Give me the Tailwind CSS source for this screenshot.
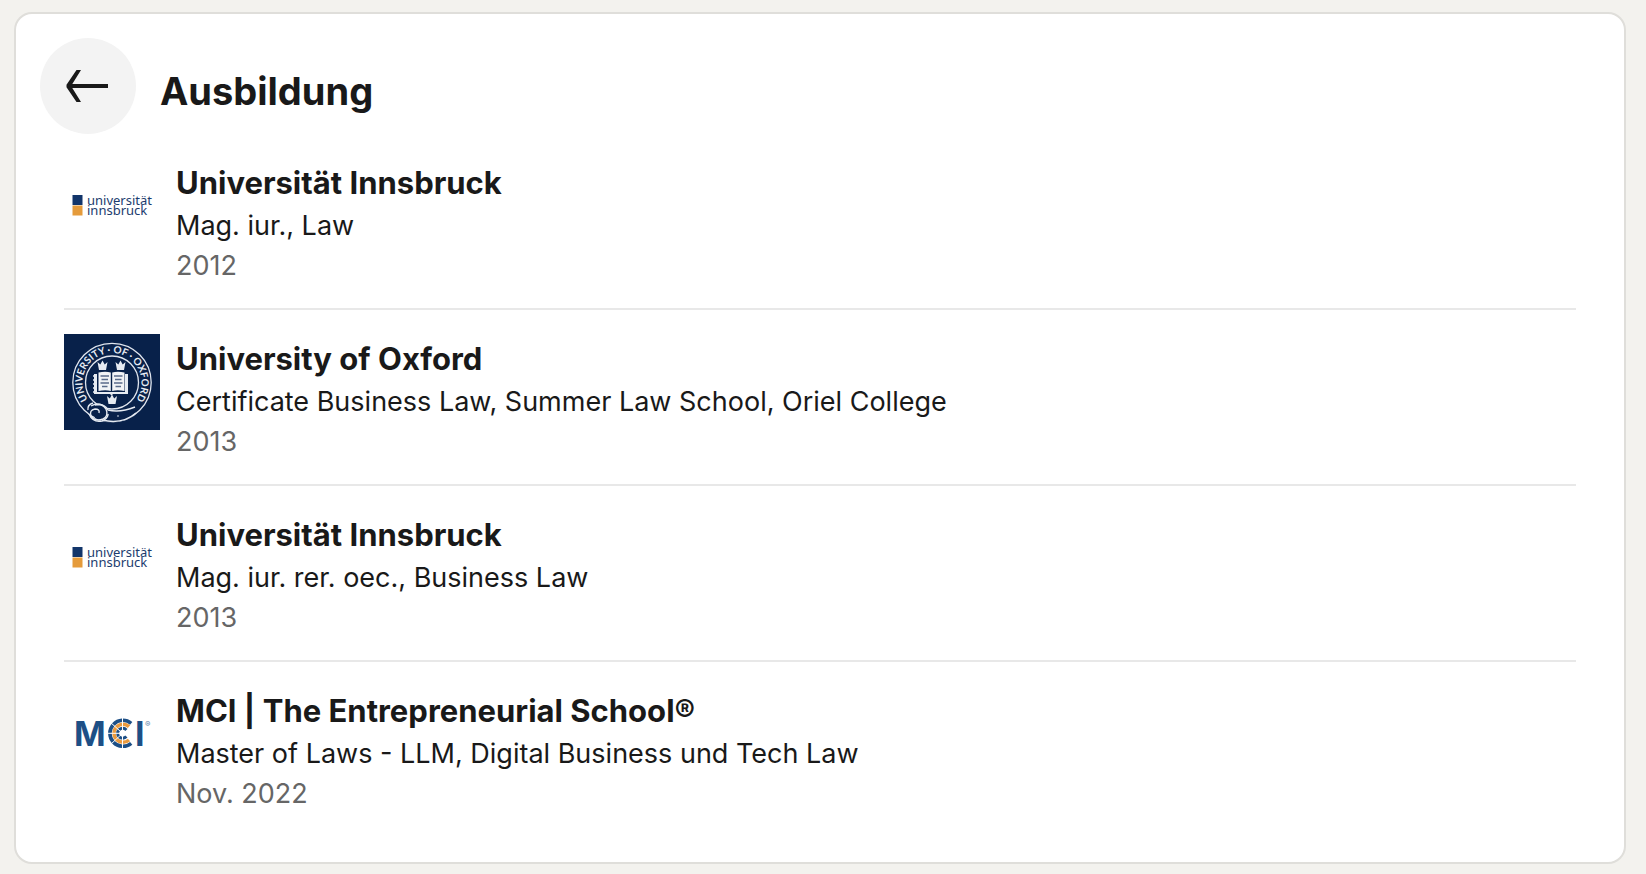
<!DOCTYPE html>
<html lang="de">
<head>
    <meta charset="UTF-8">
    <meta name="viewport" content="width=device-width, initial-scale=1.0">
    <title>Ausbildung</title>
    <script src="https://cdn.jsdelivr.net/npm/@tailwindcss/browser@4"></script>
</head>
<body class="bg-[#f3f2ee] text-[#191919] font-['Inter','Liberation_Sans',sans-serif]">

    <!-- Shared logo -->
    <svg class="hidden" aria-hidden="true">
        <symbol id="logo-innsbruck" viewBox="0 0 96 96">
            <rect x="8.5" y="37" width="10" height="10" fill="#12356a"/>
            <rect x="8.5" y="47.5" width="10" height="10" fill="#e59b3b"/>
            <text x="23" y="47" font-family="Noto Sans, sans-serif" font-size="13" fill="#1c3c6e">universität</text>
            <text x="23" y="57" font-family="Noto Sans, sans-serif" font-size="13" fill="#1c3c6e">innsbruck</text>
        </symbol>
    </svg>

    <main class="mt-3 mr-5 mb-2 ml-3.5 bg-white border-2 border-[#dfdeda] rounded-[18px] p-6">
        <!-- Header -->
        <header class="flex items-center gap-6">
            <button type="button" aria-label="Zurück" class="flex items-center justify-center size-24 rounded-full bg-[#f3f3f3]">
                <svg class="size-12" viewBox="0 0 48 48" fill="#191919">
                    <path d="M44 22v4H8.300l8.700 14h-4.500L2.500 25.200v-2.400L12.500 8H17L8.300 22z"/>
                </svg>
            </button>
            <h1 class="pt-2.5 text-[38px] leading-12 font-bold">Ausbildung</h1>
        </header>

        <!-- Education list -->
        <ul class="px-6 divide-y-2 divide-[#e8e8e8]">
            <li class="flex gap-4 pt-6 pb-[22px]">
                <svg class="size-24 shrink-0" role="img" aria-label="Universität Innsbruck"><use href="#logo-innsbruck"/></svg>
                <div>
                    <h2 class="pt-0.5 text-[31px] leading-[46px] font-bold">Universität Innsbruck</h2>
                    <p class="text-[27px] leading-10">Mag. iur., Law</p>
                    <p class="text-[27px] leading-10 text-[#666666]">2012</p>
                </div>
            </li>
            <li class="flex gap-4 pt-6 pb-[22px]">
                <svg class="size-24 shrink-0" viewBox="0 0 96 96" role="img" aria-label="University of Oxford">
                    <rect width="96" height="96" fill="#08214a"/>
                    <g fill="none" stroke="#dfe5ee">
                        <circle cx="48" cy="48.500" r="39.200" stroke-width="1.300"/>
                        <circle cx="48" cy="48.500" r="26.500" stroke-width="1.300"/>
                    </g>
                    <path id="ring" d="M48 78a29.500 29.500 0 0 1 0-59a29.500 29.500 0 0 1 0 59" fill="none"/>
                    <text font-family="Lato, sans-serif" font-size="10" font-weight="700" fill="#e6ebf2" text-anchor="middle">
                        <textPath href="#ring" startOffset="50%">UNIVERSITY · OF · OXFORD</textPath>
                    </text>
                    <!-- Crowns -->
                    <g fill="#e6ebf2">
                        <path id="crown" d="M33.500 28l2.800 2.500 2.200-4 2.200 4 2.800-2.500-1.500 8h-7z"/>
                        <use href="#crown" x="18"/>
                        <use href="#crown" x="9.500" y="34"/>
                    </g>
                    <!-- Book -->
                    <path d="M30 40h3v18h28V40h3v20H49l-1.500 1.500L46 60H30z" fill="#e6ebf2"/>
                    <path d="M34.500 38.500q7-1.500 12.300 0v18.500q-5.300-1.500-12.300 0zM48.200 38.500q5.300-1.500 12.300 0v18.500q-7-1.500-12.300 0z" fill="#f1f3f6"/>
                    <path d="M36.500 42h8.500M37.500 45.500h6.500M36.500 49h8.500M38 52.500h5.500M50 42h8.500M51 45.500h6.500M50 49h8.500M51.500 52.500h5.500" stroke="#5a6b8a" stroke-width="1.600"/>
                    <path d="M29 42h3M29 46h3M29 50h3M29 54h3M29 58h3" stroke="#e6ebf2" stroke-width="1.500"/>
                    <!-- Belt end -->
                    <path d="M28 72l10-1 8 6q14 1 24-4l-1 9q-20 12-38 2z" fill="#08214a"/>
                    <g fill="none" stroke="#e6ebf2" stroke-width="1.400">
                        <path d="M27 72q9-5 15 3q3 7-3 10q-8 3-12-3q-2-6 4-7q5 0 4 4"/>
                        <path d="M31 71q9-2 13 5q12 3 27-3M25 80q4 9 13 7q5-2 6-6M38 86q20 5 34-7M24 76q-1-5 5-7"/>
                    </g>
                    <g fill="#e6ebf2"><circle cx="44" cy="80.500" r=".8"/><circle cx="54" cy="82" r=".8"/></g>
                </svg>
                <div>
                    <h2 class="pt-0.5 text-[31px] leading-[46px] font-bold">University of Oxford</h2>
                    <p class="text-[27px] leading-10">Certificate Business Law, Summer Law School, Oriel College</p>
                    <p class="text-[27px] leading-10 text-[#666666]">2013</p>
                </div>
            </li>
            <li class="flex gap-4 pt-6 pb-[22px]">
                <svg class="size-24 shrink-0" role="img" aria-label="Universität Innsbruck"><use href="#logo-innsbruck"/></svg>
                <div>
                    <h2 class="pt-0.5 text-[31px] leading-[46px] font-bold">Universität Innsbruck</h2>
                    <p class="text-[27px] leading-10">Mag. iur. rer. oec., Business Law</p>
                    <p class="text-[27px] leading-10 text-[#666666]">2013</p>
                </div>
            </li>
            <li class="flex gap-4 py-6">
                <svg class="size-24 shrink-0" viewBox="0 0 96 96" role="img" aria-label="MCI">
                    <g font-family="Inter, sans-serif" font-size="34" font-weight="700" fill="#1d4f86">
                        <text x="10" y="59.500">M</text>
                        <text x="71" y="59.500">I</text>
                    </g>
                    <g fill="none">
                        <path d="M67.200 37.300a13 13 0 1 0 0 20" stroke="#1d4f86" stroke-width="3.600"/>
                        <path d="M65 40.600a9 9 0 1 0 0 13.400" stroke="#ea9a3e" stroke-width="3.600"/>
                        <path d="M62.400 44a5 5 0 1 0 0 6.600" stroke="#1d4f86" stroke-width="3"/>
                        <path d="M58.500 47.300H42M58.500 47.300V32M58.500 47.300V63M58.500 47.300L46 36M58.500 47.300L46 59" stroke="#fff"/>
                    </g>
                    <text x="81" y="40.500" font-family="Inter, sans-serif" font-size="8" fill="#5f82a8">®</text>
                </svg>
                <div>
                    <h2 class="pt-0.5 text-[31px] leading-[46px] font-bold">MCI | The Entrepreneurial School®</h2>
                    <p class="text-[27px] leading-10">Master of Laws - LLM, Digital Business und Tech Law</p>
                    <p class="text-[27px] leading-10 text-[#666666]">Nov. 2022</p>
                </div>
            </li>
        </ul>
    </main>

</body>
</html>
